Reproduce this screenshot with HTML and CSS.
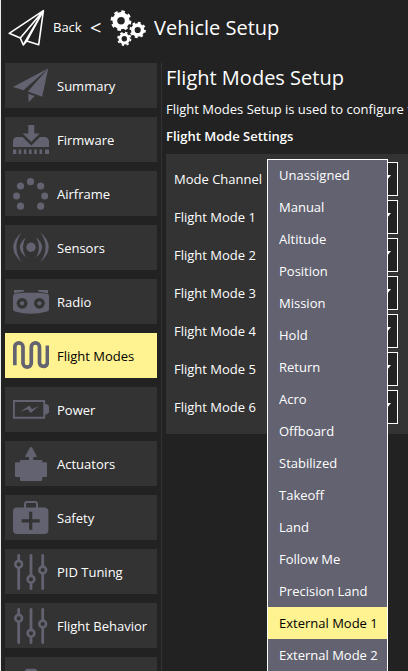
FILE: index.html
```html
<!DOCTYPE html>
<html lang="en">
<head>
<meta charset="utf-8">
<title>Vehicle Setup</title>
<link rel="stylesheet" href="styles.css">
</head>
<body>
<svg class="defs" width="0" height="0">
  <symbol id="sliders" viewBox="0 0 36 45">
    <path d="M5.7 6.3V39.7M18 6.3V39.7M29.7 6.3V39.7" fill="none" stroke="currentColor" stroke-width="2.8" stroke-linecap="round"/>
    <g class="hole" stroke="currentColor" stroke-width="2.6"><circle cx="5.7" cy="15.3" r="3.4"/><circle cx="18" cy="30.3" r="3.4"/><circle cx="29.7" cy="21" r="3.4"/></g>
  </symbol>
</svg>
<header class="toolbar">
  <svg class="logo" viewBox="0 0 38 38"><path d="M35.4 1.7 1.2 24.3 12.3 29 15.3 36 18.7 32 30.7 35.7ZM12.3 29 35.4 1.7 15.3 36M18.7 32 35.4 1.7" fill="none" stroke="#fff" stroke-width="1.6" stroke-linejoin="round"/></svg>
  <span class="back">Back</span>
  <span class="chevron">&lt;</span>
  <svg class="gears" viewBox="0 0 36 36" fill="none" stroke="#fff">
    <circle cx="11" cy="10.7" r="6.2" stroke-width="4.8"/><circle cx="11" cy="10.7" r="9.2" stroke-width="2.4" stroke-dasharray="3.6 3.62"/>
    <circle cx="27.7" cy="20" r="4.9" stroke-width="3.6"/><circle cx="27.7" cy="20" r="7.2" stroke-width="2" stroke-dasharray="2.8 2.85"/>
    <circle cx="14.3" cy="28.8" r="4.2" stroke-width="3"/><circle cx="14.3" cy="28.8" r="6.2" stroke-width="1.8" stroke-dasharray="2.4 2.47"/>
  </svg>
  <h1>Vehicle Setup</h1>
</header>
<div class="content">
  <nav class="nav">
    <a class="item"><svg viewBox="0 0 36 45"><path d="M0 24 35.3 5.3 10.5 27.2ZM35.3 5.3 29.2 33.8 14.8 28.5ZM15.3 30.7 21.8 33.1 15.6 39.2Z"/></svg>Summary</a>
    <a class="item"><svg viewBox="0 0 36 45"><path d="M15.3 8h6v8.5h5.3L18.3 25 9.7 16.5h5.6ZM0 30V24Q.5 20.2 4 20H9.6L18.3 28.4 27 20H32Q35.6 20.4 36 24V30ZM0 32.4h3.3v4.7H0ZM5.6 32.4h2.6v4.7H5.6ZM10.8 32.4h2.6v4.7h-2.6ZM16 32.4h2.6v4.7H16ZM21.2 32.4h2.6v4.7h-2.6ZM26.5 32.4h2.6v4.7h-2.6ZM32 32.4h4v4.7h-4Z"/></svg>Firmware</a>
    <a class="item"><svg viewBox="0 0 36 45"><circle cx="17.5" cy="10.7" r="3.6"/><circle cx="7.5" cy="15" r="3.6"/><circle cx="27.7" cy="15" r="3.6"/><circle cx="3.5" cy="25" r="3.5"/><circle cx="31.7" cy="25" r="3.5"/><circle cx="7.5" cy="35.2" r="3.6"/><circle cx="27.7" cy="35.2" r="3.6"/></svg>Airframe</a>
    <a class="item"><svg viewBox="0 0 36 45"><circle cx="18" cy="22.3" r="4.7"/><path d="M8.8 7.3Q-8.3 22.3 8.8 37.3Q-2 22.3 8.8 7.3ZM27.2 7.3Q44.3 22.3 27.2 37.3Q38 22.3 27.2 7.3ZM13 12.3Q.8 22.3 13 32.3Q7 22.3 13 12.3ZM23 12.3Q35.2 22.3 23 32.3Q29 22.3 23 12.3Z"/></svg>Sensors</a>
    <a class="item"><svg viewBox="0 0 36 45"><path d="M1 11H11L10.5 12.8 1 14.3ZM35 11H25L25.5 12.8 35 14.3ZM0 17Q.2 15 2 14.8L11 13.7H25L34 14.8Q35.8 15 36 17V30Q36 32 34 32.5Q18 37 2 32.5Q0 32 0 30Z"/><g class="hole"><circle cx="9.1" cy="24.3" r="5.4"/><circle cx="26.4" cy="24.3" r="5.4"/></g><circle cx="9.1" cy="24.3" r="2.1"/><circle cx="26.4" cy="24.3" r="2.1"/></svg>Radio</a>
    <a class="item active"><svg viewBox="0 0 36 45"><path d="M0 30.3h1.8V14a4.1 4.1 0 0 1 8.2 0V30a4.1 4.1 0 0 0 8.3 0V14a4.1 4.1 0 0 1 8.2 0V30a4 4 0 0 0 7.9 0V14.4H36" fill="none" stroke="currentColor" stroke-width="3.7"/></svg>Flight Modes</a>
    <a class="item"><svg viewBox="0 0 36 45"><path d="M.9 14H31.2V30.8H.9Z" fill="none" stroke="currentColor" stroke-width="1.9"/><path d="M32 17H33.7L36 19V25.5L33.7 27.5H32ZM7 24.7 16.5 18.5 19 22.2 26 18.7 17.7 26 14.7 22.3Z"/></svg>Power</a>
    <a class="item"><svg viewBox="0 0 36 45"><path d="M16.8 6.8Q18 5.3 19.2 6.8L23.8 15.2Q23.8 16 23 16H20.3V19H29.3V21.3H33Q34 21.3 34 22.3V35Q34 36 33 36H29.3V38.5Q29.3 40 28 40H8.3Q7 40 7 38.5V36H3Q2 36 2 35V22.3Q2 21.3 3 21.3H7V19H16V16H13Q12.2 16 12.2 15.2Z"/></svg>Actuators</a>
    <a class="item"><svg viewBox="0 0 36 45"><rect y="12.5" width="35.4" height="26.5" rx="4"/><path d="M12 13V9Q12 7 14 7H22Q24 7 24 9V13" fill="none" stroke="currentColor" stroke-width="2"/><path class="cut" d="M17.7 16.8V34.8M8.7 25.8H26.7"/></svg>Safety</a>
    <a class="item"><svg><use href="#sliders"/></svg>PID Tuning</a>
    <a class="item"><svg><use href="#sliders"/></svg>Flight Behavior</a>
    <a class="item partial"><svg viewBox="0 0 36 14"><path d="M11.7 14Q12.5 11.7 14.5 11.7H21.5Q23.5 11.7 24.3 14Z"/></svg></a>
  </nav>
  <main class="page">
    <h2>Flight Modes Setup</h2>
    <p class="intro">Flight Modes Setup is used to configure t</p>
    <h3>Flight Mode Settings</h3>
    <section class="panel">
      <div class="row"><span>Mode Channel</span><div class="combo"></div></div>
      <div class="row"><span>Flight Mode 1</span><div class="combo"></div></div>
      <div class="row"><span>Flight Mode 2</span><div class="combo"></div></div>
      <div class="row"><span>Flight Mode 3</span><div class="combo"></div></div>
      <div class="row"><span>Flight Mode 4</span><div class="combo"></div></div>
      <div class="row"><span>Flight Mode 5</span><div class="combo"></div></div>
      <div class="row"><span>Flight Mode 6</span><div class="combo"></div></div>
      <ul class="menu">
        <li>Unassigned</li><li>Manual</li><li>Altitude</li><li>Position</li><li>Mission</li><li>Hold</li><li>Return</li><li>Acro</li><li>Offboard</li><li>Stabilized</li><li>Takeoff</li><li>Land</li><li>Follow Me</li><li>Precision Land</li><li class="selected">External Mode 1</li><li>External Mode 2</li>
      </ul>
    </section>
  </main>
</div>
</body>
</html>
```
FILE: styles.css
```css
* { box-sizing: border-box; }
body {
  margin: 0;
  height: 671px;
  overflow: hidden;
  background: #222;
  border-left: 1px solid #e6ecec;
  color: #fff;
  font: 13px/18px "Open Sans", sans-serif;
}
.defs { position: absolute; }
h1, h2, h3, p, ul { margin: 0; padding: 0; font-weight: 400; white-space: nowrap; }
.toolbar { display: flex; align-items: center; height: 55px; padding-left: 7px; }
.logo { width: 38px; height: 38px; }
.back { margin-left: 7px; width: 29px; padding-bottom: 2px; }
.chevron { margin-left: 8px; width: 13px; font-size: 20px; line-height: 24px; }
.gears { width: 36px; height: 36px; margin-left: 7px; }
h1 { margin-left: 8px; font-size: 20px; line-height: 28px; }
.content { display: flex; height: 616px; padding: 8px 0 0 4px; }
.nav { flex: none; width: 152px; display: flex; flex-direction: column; gap: 9px; }
.item {
  flex: none;
  display: flex;
  align-items: center;
  height: 45px;
  padding-left: 8px;
  background: #333;
  white-space: nowrap;
}
.item svg { width: 36px; height: 45px; margin-right: 8px; color: #626270; fill: currentColor; flex: none; }
.item.partial { height: 14px; }
.item.partial svg { height: 14px; }
.item .hole, .hole { fill: #333; }
.cut { stroke: #333; stroke-width: 3.2; fill: none; }
.active { background: #fff291; color: #000; }
.page { flex: 1; min-width: 0; margin-left: 4px; padding-left: 4px; border-left: 1px solid #333; }
h2 { padding-top: 1px; font-size: 20px; line-height: 28px; }
.intro { margin-top: 8px; overflow: hidden; }
h3 { margin-top: 9px; font-size: 13px; font-weight: 600; }
.panel { position: relative; height: 280px; margin-top: 9px; padding: 8px; background: #333; display: flex; flex-direction: column; gap: 4px; }
.row { display: flex; align-items: center; height: 34px; }
.row span { width: 94px; white-space: nowrap; }
.combo { flex: none; width: 130px; height: 34px; border: 1px solid #fff; background: #222; display: flex; align-items: center; justify-content: flex-end; padding: 0 6px 3px 0; }
.combo::after { content: ""; border: 4px solid transparent; border-top: 5px solid #fff; border-bottom: 0; }
.menu { position: absolute; left: 101px; top: 5px; width: 121px; height: 512px; list-style: none; background: #626270; border: 1px solid #fff; border-bottom: 0; }
.menu li { height: 32px; padding-left: 11px; line-height: 32px; white-space: nowrap; }
.menu li:first-child { height: 31px; line-height: 31px; }
.menu .selected { background: #fff291; color: #000; }
```
